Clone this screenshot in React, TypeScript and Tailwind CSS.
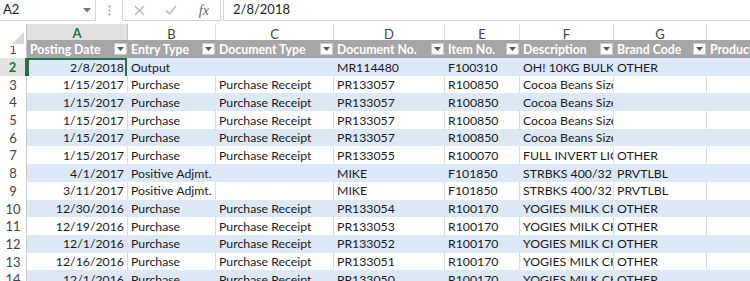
import React from "react";

const FONT = { fontFamily: "Lato, 'Open Sans', sans-serif" } as const;

type Row = [string, string, string, string, string, string, string];

const rows: Row[] = [
  ["2/8/2018", "Output", "", "MR114480", "F100310", "OH! 10KG BULK ICING", "OTHER"],
  ["1/15/2017", "Purchase", "Purchase Receipt", "PR133057", "R100850", "Cocoa Beans Size 7", ""],
  ["1/15/2017", "Purchase", "Purchase Receipt", "PR133057", "R100850", "Cocoa Beans Size 7", ""],
  ["1/15/2017", "Purchase", "Purchase Receipt", "PR133057", "R100850", "Cocoa Beans Size 7", ""],
  ["1/15/2017", "Purchase", "Purchase Receipt", "PR133057", "R100850", "Cocoa Beans Size 7", ""],
  ["1/15/2017", "Purchase", "Purchase Receipt", "PR133055", "R100070", "FULL INVERT LIQUID", "OTHER"],
  ["4/1/2017", "Positive Adjmt.", "", "MIKE", "F101850", "STRBKS 400/32 CT", "PRVTLBL"],
  ["3/11/2017", "Positive Adjmt.", "", "MIKE", "F101850", "STRBKS 400/32 CT", "PRVTLBL"],
  ["12/30/2016", "Purchase", "Purchase Receipt", "PR133054", "R100170", "YOGIES MILK CHOC", "OTHER"],
  ["12/19/2016", "Purchase", "Purchase Receipt", "PR133053", "R100170", "YOGIES MILK CHOC", "OTHER"],
  ["12/1/2016", "Purchase", "Purchase Receipt", "PR133052", "R100170", "YOGIES MILK CHOC", "OTHER"],
  ["12/16/2016", "Purchase", "Purchase Receipt", "PR133051", "R100170", "YOGIES MILK CHOC", "OTHER"],
  ["12/1/2016", "Purchase", "Purchase Receipt", "PR133050", "R100170", "YOGIES MILK CHOC", "OTHER"],
];

const headers = ["Posting Date", "Entry Type", "Document Type", "Document No.", "Item No.", "Description", "Brand Code", "Product"];
const letters = ["A", "B", "C", "D", "E", "F", "G", "H"];

const GRID = "grid w-[870px] grid-cols-[27px_101px_88px_118px_111px_75px_94px_93px_163px]";

function FilterBtn() {
  return (
    <div className="absolute right-[1px] top-[3px] w-[13px] h-[12px] bg-white border border-[#c8c8c8] flex items-center justify-center">
      <svg width="7" height="4" viewBox="0 0 7 4">
        <path d="M0 0 L7 0 L3.5 4 Z" fill="#555" />
      </svg>
    </div>
  );
}

export default function App() {
  return (
    <div className="w-[750px] h-[281px] overflow-hidden bg-white text-[12.3px] text-[#1a1a1a]" style={FONT}>
      {/* Formula bar */}
      <div className="h-[24px] flex items-start bg-white">
        <div className="w-[96px] h-[21px] border border-[#d4d4d4] border-l-0 border-t-0 flex items-center justify-between pl-[3px] pr-[4px]">
          <span className="text-[13px] text-[#222]">A2</span>
          <svg width="8" height="5" viewBox="0 0 8 5">
            <path d="M0 0 L8 0 L4 4.5 Z" fill="#777" />
          </svg>
        </div>
        <div className="w-[26px] h-[21px] flex items-center justify-center">
          <svg width="3" height="11" viewBox="0 0 3 11">
            <circle cx="1.5" cy="1.5" r="1" fill="#9a9a9a" />
            <circle cx="1.5" cy="5.5" r="1" fill="#9a9a9a" />
            <circle cx="1.5" cy="9.5" r="1" fill="#9a9a9a" />
          </svg>
        </div>
        <div className="w-[99px] h-[21px] border border-[#d4d4d4] border-t-0 flex items-center">
          <div className="w-[33px] flex justify-center">
            <svg width="11" height="11" viewBox="0 0 11 11">
              <path d="M1 1 L10 10 M10 1 L1 10" stroke="#b5b5b5" strokeWidth="1.3" />
            </svg>
          </div>
          <div className="w-[33px] flex justify-center">
            <svg width="12" height="10" viewBox="0 0 12 10">
              <path d="M1 5.5 L4.5 9 L11 1" stroke="#b5b5b5" strokeWidth="1.3" fill="none" />
            </svg>
          </div>
          <div className="w-[33px] flex justify-center">
            <span className="italic text-[#666] text-[14px]" style={{ fontFamily: "'Liberation Serif', serif" }}>
              fx
            </span>
          </div>
        </div>
        <div className="flex-1 h-[21px] ml-[2px] border-b border-l border-[#d4d4d4] flex items-center pl-[9px]">
          <span className="text-[13px] text-[#222]">2/8/2018</span>
        </div>
      </div>

      {/* Column letters */}
      <div className={`${GRID} h-[16px] border-b border-[#c6c6c6]`}>
        <div className="relative bg-white border-r border-[#c6c6c6]">
          <svg className="absolute right-[2px] bottom-[2px]" width="12" height="12" viewBox="0 0 12 12">
            <path d="M12 0 L12 12 L0 12 Z" fill="#d9d9d9" />
          </svg>
        </div>
        {letters.map((l, i) => (
          <div
            key={l}
            className={
              i === 0
                ? "bg-[#e1e1e1] border-r border-[#c6c6c6] border-b-2 border-b-[#217346] flex items-center justify-center text-[#217346] font-bold text-[13px]"
                : "bg-white border-r border-[#dcdcdc] flex items-center justify-center text-[#444] text-[13px]"
            }
          >
            {l}
          </div>
        ))}
      </div>

      {/* Row 1 headers */}
      <div className={`${GRID} h-[18px]`}>
        <div className="bg-white border-r border-[#c6c6c6] flex items-center justify-center text-[#444] text-[13px]">1</div>
        {headers.map((h) => (
          <div key={h} className="relative bg-[#a6a6a6] text-white font-bold pl-[3px] flex items-center whitespace-nowrap overflow-hidden">
            {h}
            <FilterBtn />
          </div>
        ))}
      </div>

      {/* Data rows */}
      {rows.map((r, idx) => {
        const n = idx + 2;
        const blue = n % 2 === 0;
        const bg = blue ? "bg-[#dde8f5]" : "bg-white";
        const line = blue ? "border-[#dde8f5]" : "border-[#dadada]";
        return (
          <div key={n} className={`${GRID} h-[17.7px]`}>
            <div
              className={
                n === 2
                  ? "bg-[#e1e1e1] border-r-2 border-[#217346] flex items-center justify-center text-[#217346] font-bold text-[13px]"
                  : "bg-white border-r border-[#c6c6c6] flex items-center justify-center text-[#444] text-[13px]"
              }
            >
              {n}
            </div>
            {[...r, ""].map((c, ci) => (
              <div
                key={ci}
                className={`relative ${bg} border-r ${line} flex items-center whitespace-nowrap overflow-hidden px-[3px] ${
                  ci === 0 ? "justify-end" : ""
                }`}
              >
                {c}
                {n === 2 && ci === 0 ? (
                  <div className="absolute inset-0 border-2 border-[#217346]" />
                ) : null}
              </div>
            ))}
          </div>
        );
      })}
    </div>
  );
}
